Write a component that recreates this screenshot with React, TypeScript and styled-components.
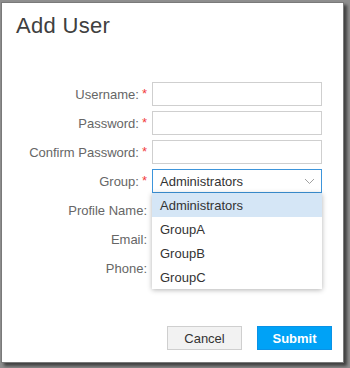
import React from "react";
import styled, { createGlobalStyle } from "styled-components";

const Global = createGlobalStyle`
  html, body { margin: 0; padding: 0; background: #8e8e8e; }
  body { font-family: "Liberation Sans", Arial, sans-serif; width: 350px; height: 368px; overflow: hidden; }
  #root { width: 350px; height: 368px; }
`;

const Dialog = styled.div`
  box-sizing: border-box;
  margin: 2px 0 0 1px;
  width: 343px;
  height: 361px;
  background: #fff;
  border: 1px solid #7a7a7a;
  box-shadow: 3px 3px 3px rgba(0, 0, 0, 0.55);
  display: flex;
  flex-direction: column;
`;

const Title = styled.h1`
  margin: 10px 0 0 14px;
  font-size: 22px;
  line-height: 26px;
  font-weight: normal;
  color: #404040;
  letter-spacing: 0.3px;
`;

const Form = styled.div`
  display: grid;
  grid-template-columns: 150px 170px;
  grid-auto-rows: 24px;
  row-gap: 5px;
  margin-top: 43px;
`;

const Label = styled.label`
  display: flex;
  align-items: center;
  justify-content: flex-end;
  padding-right: 5px;
  font-size: 13px;
  color: #666;
  white-space: nowrap;
`;

const Star = styled.span`
  color: #f23c3c;
  margin-left: 3px;
  position: relative;
  top: -1px;
`;

const Input = styled.input`
  box-sizing: border-box;
  width: 170px;
  height: 24px;
  border: 1px solid #cfcfcf;
  padding: 0 6px;
  font-family: inherit;
  font-size: 13px;
  outline: none;
  margin: 0;
`;

const SelectWrap = styled.div`
  position: relative;
`;

const SelectBox = styled.div`
  box-sizing: border-box;
  height: 24px;
  border: 1px solid #3d95db;
  display: flex;
  align-items: center;
  justify-content: space-between;
  padding: 0 6px 0 7px;
  font-size: 13px;
  color: #333;
`;

const Menu = styled.ul`
  position: absolute;
  left: 0;
  top: 24px;
  width: 170px;
  margin: 0;
  padding: 0;
  list-style: none;
  background: #fff;
  box-shadow: 0 1px 5px rgba(0, 0, 0, 0.3);
  z-index: 2;
`;

const Item = styled.li<{ $active?: boolean }>`
  height: 24px;
  display: flex;
  align-items: center;
  padding-left: 8px;
  font-size: 13px;
  color: #333;
  background: ${(p) => (p.$active ? "#d5e6f6" : "#fff")};
`;

const Footer = styled.div`
  margin-top: auto;
  display: flex;
  justify-content: flex-end;
  gap: 15px;
  padding: 0 11px 12px 0;
`;

const Button = styled.button<{ $primary?: boolean }>`
  box-sizing: border-box;
  width: 75px;
  height: 24px;
  font-family: inherit;
  font-size: 13px;
  border: 1px solid ${(p) => (p.$primary ? "#0a92e6" : "#cfcfcf")};
  background: ${(p) => (p.$primary ? "#00a2f6" : "#f2f2f2")};
  color: ${(p) => (p.$primary ? "#fff" : "#333")};
  font-weight: ${(p) => (p.$primary ? "bold" : "normal")};
  padding: 0;
  margin: 0;
`;

const Chevron = () => (
  <svg width="11" height="7" viewBox="0 0 11 7">
    <polyline points="1,1 5.5,5.5 10,1" fill="none" stroke="#a0a0a0" strokeWidth="1" />
  </svg>
);

export default function App() {
  return (
    <>
      <Global />
      <Dialog>
        <Title>Add User</Title>
        <Form>
          <Label>
            Username:<Star>*</Star>
          </Label>
          <Input />
          <Label>
            Password:<Star>*</Star>
          </Label>
          <Input type="password" />
          <Label>
            Confirm Password:<Star>*</Star>
          </Label>
          <Input type="password" />
          <Label>
            Group:<Star>*</Star>
          </Label>
          <SelectWrap>
            <SelectBox>
              <span>Administrators</span>
              <Chevron />
            </SelectBox>
            <Menu>
              <Item $active>Administrators</Item>
              <Item>GroupA</Item>
              <Item>GroupB</Item>
              <Item>GroupC</Item>
            </Menu>
          </SelectWrap>
          <Label>Profile Name:</Label>
          <Input />
          <Label>Email:</Label>
          <Input />
          <Label>Phone:</Label>
          <Input />
        </Form>
        <Footer>
          <Button>Cancel</Button>
          <Button $primary>Submit</Button>
        </Footer>
      </Dialog>
    </>
  );
}
